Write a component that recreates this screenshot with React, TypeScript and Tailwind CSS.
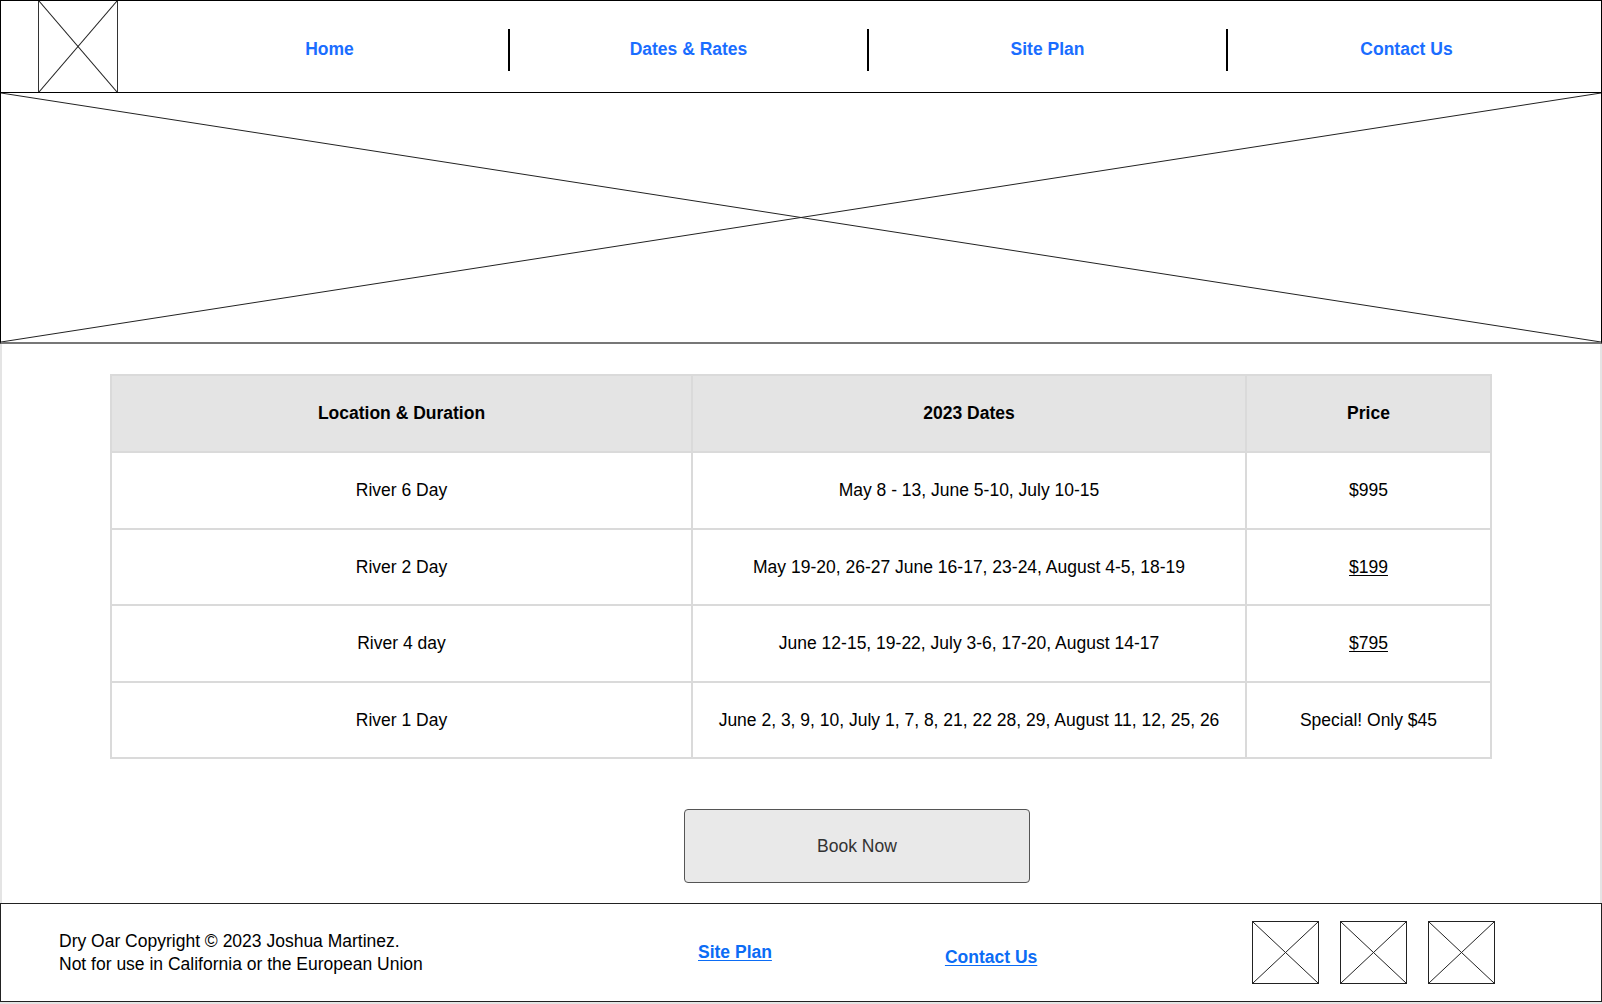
import React from 'react';

// Placeholder image box: a frame with an X from corner to corner
function Placeholder({ className }: { className?: string }) {
  return (
    <div className={`relative ${className ?? ''}`}>
      <svg className="absolute inset-0 h-full w-full" viewBox="0 0 100 100" preserveAspectRatio="none">
        <line x1="0" y1="0" x2="100" y2="100" stroke="#222" strokeWidth="1" vectorEffect="non-scaling-stroke" />
        <line x1="100" y1="0" x2="0" y2="100" stroke="#222" strokeWidth="1" vectorEffect="non-scaling-stroke" />
      </svg>
    </div>
  );
}

const navItems = ['Home', 'Dates & Rates', 'Site Plan', 'Contact Us'];

const trips = [
  { name: 'River 6 Day', dates: 'May 8 - 13, June 5-10, July 10-15', price: '$995', link: false },
  { name: 'River 2 Day', dates: 'May 19-20, 26-27 June 16-17, 23-24, August 4-5, 18-19', price: '$199', link: true },
  { name: 'River 4 day', dates: 'June 12-15, 19-22, July 3-6, 17-20, August 14-17', price: '$795', link: true },
  {
    name: 'River 1 Day',
    dates: 'June 2, 3, 9, 10, July 1, 7, 8, 21, 22 28, 29, August 11, 12, 25, 26',
    price: 'Special! Only $45',
    link: false,
  },
];

export default function App() {
  return (
    <div className="flex h-[1004px] w-[1602px] flex-col bg-white font-['Liberation_Sans',Arial,sans-serif] text-[17.5px] text-black">
      {/* Header */}
      <header className="flex h-[93px] shrink-0 items-center border border-black">
        <Placeholder className="ml-[37px] h-full w-[80px] border-x border-[#333]" />
        <nav className="ml-[33px] flex h-full items-center">
          {navItems.map((item, i) => (
            <React.Fragment key={item}>
              {i > 0 && <div className="mt-[6px] h-[42px] w-[2px] bg-black" />}
              <a href="#" className="flex h-full w-[357px] items-center justify-center pt-[6px] font-bold text-[#1a6dff]">
                {item}
              </a>
            </React.Fragment>
          ))}
        </nav>
      </header>

      {/* Hero image */}
      <Placeholder className="h-[251px] shrink-0 border-x border-b-2 border-black border-b-[#777]" />

      {/* Rates */}
      <main className="flex flex-1 flex-col border-x-2 border-[#e4e4e4]">
        <table className="ml-[108px] mt-[30px] w-[1382px] table-fixed border-collapse border-2 border-[#dadada]">
          <thead>
            <tr className="h-[77px] bg-[#e4e4e4]">
              <th className="w-[581px] border-2 border-[#dadada] font-bold">Location &amp; Duration</th>
              <th className="w-[554px] border-2 border-[#dadada] font-bold">2023 Dates</th>
              <th className="border-2 border-[#dadada] font-bold">Price</th>
            </tr>
          </thead>
          <tbody>
            {trips.map((t) => (
              <tr key={t.name} className="h-[76.5px]">
                <td className="border-2 border-[#dadada] text-center">{t.name}</td>
                <td className="border-2 border-[#dadada] text-center">{t.dates}</td>
                <td className="border-2 border-[#dadada] text-center">
                  {t.link ? <span className="underline underline-offset-2">{t.price}</span> : t.price}
                </td>
              </tr>
            ))}
          </tbody>
        </table>

        <button className="ml-[682px] mt-[50px] h-[74px] w-[346px] rounded-[4px] border border-[#555] bg-[#e9e9e9] text-[#333]">
          Book Now
        </button>
      </main>

      {/* Footer */}
      <div className="shrink-0 bg-[#e4e4e4] pb-[2px]">
        <footer className="flex h-[99px] items-center border border-[#222] bg-white">
          <div className="w-[697px] pl-[58px] leading-[23px]">
            <p>Dry Oar Copyright © 2023 Joshua Martinez.</p>
            <p>Not for use in California or the European Union</p>
          </div>
          <a href="#" className="font-bold text-[#0b6cf5] underline underline-offset-2">
            Site Plan
          </a>
          <a href="#" className="ml-[173px] mt-[10px] font-bold text-[#0b6cf5] underline underline-offset-2">
            Contact Us
          </a>
          <div className="ml-[215px] flex gap-[21px]">
            <Placeholder className="h-[63px] w-[67px] border-[1.5px] border-[#222]" />
            <Placeholder className="h-[63px] w-[67px] border-[1.5px] border-[#222]" />
            <Placeholder className="h-[63px] w-[67px] border-[1.5px] border-[#222]" />
          </div>
        </footer>
      </div>
    </div>
  );
}
